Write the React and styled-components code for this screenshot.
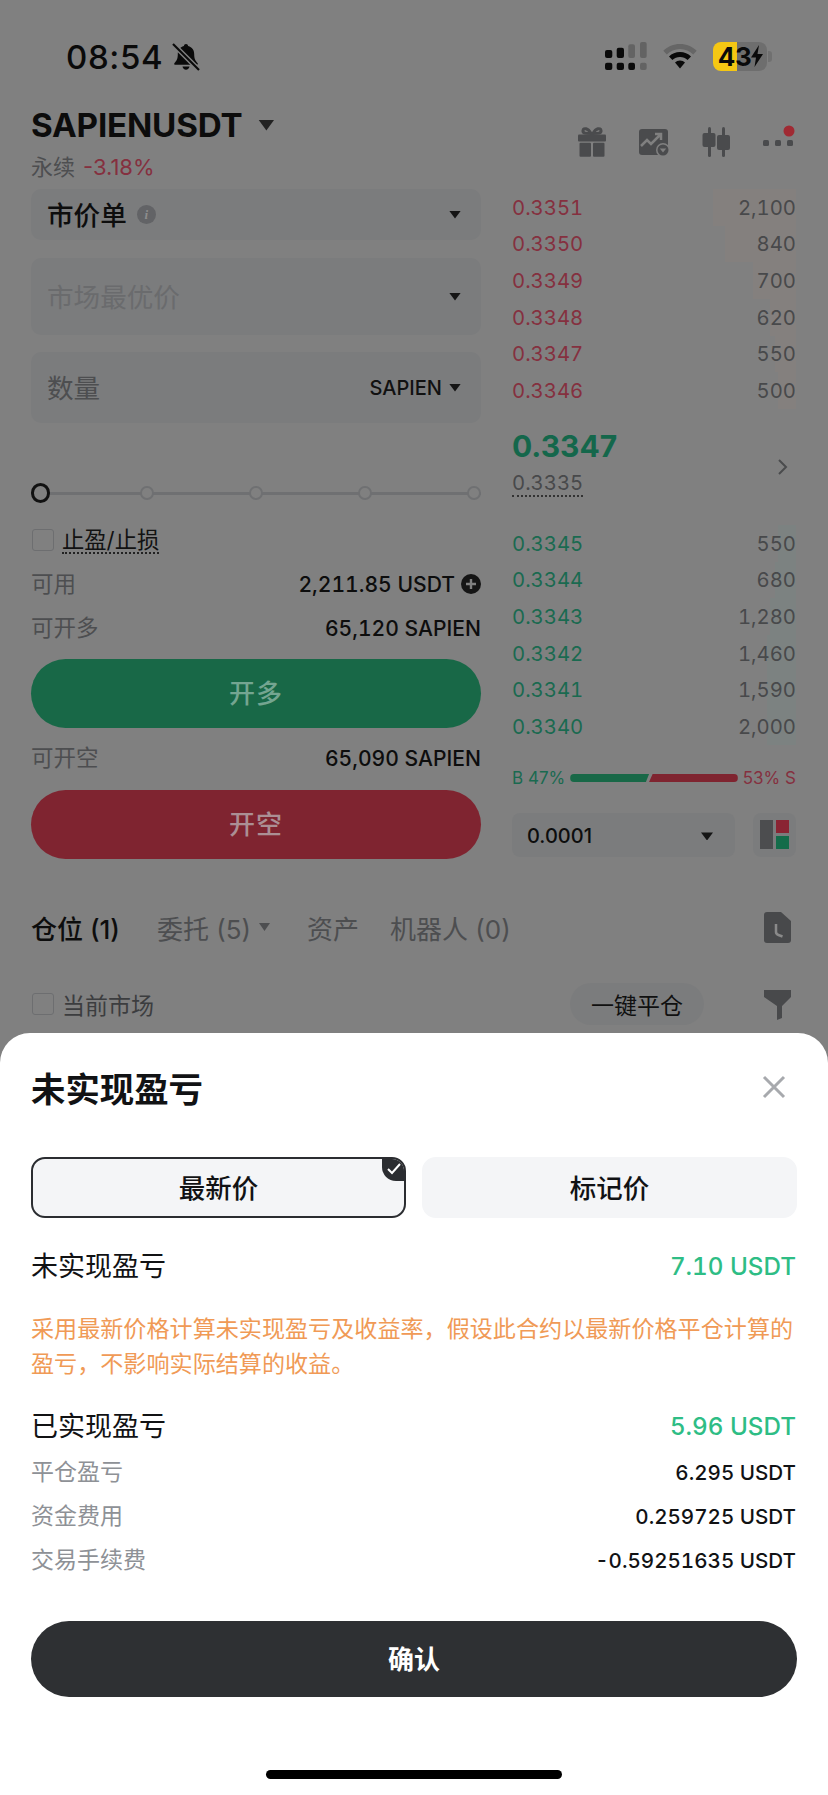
import React from "react";
import styled, { createGlobalStyle } from "styled-components";

const Global = createGlobalStyle`
  html, body { margin: 0; padding: 0; background: #808080; }
  * { box-sizing: border-box; }
  body { font-family: Inter, "Noto Sans CJK SC", "Noto Sans", sans-serif; }
`;

const Screen = styled.div`
  position: relative;
  width: 828px;
  height: 1795px;
  overflow: hidden;
  background: #808080;
  color: #0d0d0d;
`;

/* ---------- status bar ---------- */
const StatusBar = styled.div`
  display: flex;
  align-items: center;
  height: 106px;
  padding: 40px 61px 32px 66px;
`;
const Time = styled.span`
  font-size: 33px;
  font-weight: 500;
  line-height: 34px;
  color: #0a0a0a;
  letter-spacing: 0.6px;
`;
const BellIcon = styled.svg`
  width: 28px;
  height: 28px;
  margin-left: 9px;
`;
const StatusRight = styled.div`
  display: flex;
  align-items: center;
  gap: 16px;
  margin-left: auto;
  margin-top: -2px;
`;
const Battery = styled.div`
  display: flex;
  align-items: center;
  justify-content: center;
  width: 54px;
  height: 29px;
  padding-left: 1px;
  border-radius: 8px;
  background: linear-gradient(90deg, #f5c713 24px, #6e6e6e 24px);
  font-size: 26px;
  font-weight: 700;
  letter-spacing: -0.5px;
  color: #0a0a0a;
  &::after {
    content: "";
    position: absolute;
    left: 768px;
    width: 4px;
    height: 11px;
    border-radius: 0 3px 3px 0;
    background: #707070;
  }
`;

/* ---------- header ---------- */
const Header = styled.div`
  display: flex;
  justify-content: space-between;
  height: 83px;
  padding: 0 33px 0 31px;
`;
const TitleRow = styled.div`
  display: flex;
  align-items: center;
  gap: 16px;
  height: 38px;
`;
const Title = styled.div`
  font-size: 33.2px;
  font-weight: 700;
  line-height: 38px;
  letter-spacing: -0.2px;
  color: #0c0c0c;
`;
const SubRow = styled.div`
  display: flex;
  gap: 8px;
  margin-top: 8px;
  font-size: 22px;
  line-height: 30px;
  color: #4d4e50;
`;
const RedText = styled.span`
  color: #85303f;
`;
const HeaderIcons = styled.div`
  display: flex;
  gap: 28px;
  padding-top: 19px;
`;
const IconSvg = styled.svg`
  width: 34px;
  height: 34px;
`;
const Caret = styled.span`
  display: inline-block;
  flex: none;
  width: ${(p) => p.$w || 12}px;
  height: ${(p) => p.$h || 8}px;
  background: ${(p) => p.$color || "#151515"};
  clip-path: polygon(0 0, 100% 0, 50% 100%);
`;

/* ---------- trade panel ---------- */
const Main = styled.div`
  display: flex;
  gap: 31px;
  padding-left: 31px;
`;
const FormCol = styled.div`
  width: 450px;
`;
const Field = styled.div`
  display: flex;
  align-items: center;
  height: ${(p) => p.$h}px;
  margin-top: ${(p) => p.$mt || 0}px;
  padding: 0 20px 0 16px;
  border-radius: 10px;
  background: #7b7c7d;
`;
const FieldLabel = styled.span`
  font-size: 26.6px;
  font-weight: ${(p) => (p.$strong ? 500 : 400)};
  color: ${(p) => p.$color || "#0d0d0d"};
  padding-bottom: 2px;
`;
const InfoDot = styled.span`
  display: flex;
  align-items: center;
  justify-content: center;
  width: 19px;
  height: 19px;
  margin-left: 10px;
  border-radius: 50%;
  background: #626366;
  color: #8d8d8d;
  font: italic 700 13px "Liberation Serif", serif;
`;
const FieldEnd = styled.div`
  display: flex;
  align-items: center;
  gap: 7px;
  margin-left: auto;
  font-size: 20px;
  font-weight: 500;
  color: #111;
`;
const Slider = styled.div`
  display: flex;
  align-items: center;
  gap: 95.5px;
  width: 450px;
  height: 20px;
  margin-top: 60px;
  background: linear-gradient(#6f7072, #6f7072) center / 100% 3px no-repeat;
`;
const Handle = styled.span`
  width: 20px;
  height: 20px;
  margin-right: -6px;
  border: 3px solid #111;
  border-radius: 50%;
  background: #808080;
`;
const Stop = styled.span`
  width: 14px;
  height: 14px;
  border: 2px solid #6f7072;
  border-radius: 50%;
  background: #808080;
`;
const CheckRow = styled.div`
  display: flex;
  align-items: center;
  gap: 8px;
  height: 24px;
  margin-top: ${(p) => p.$mt || 0}px;
`;
const CheckBox = styled.span`
  width: 22px;
  height: 22px;
  margin-left: 1px;
  border: 1.5px solid #6d6e70;
  border-radius: 3px;
`;
const CheckLabel = styled.span`
  font-size: ${(p) => p.$size || 22.3}px;
  line-height: 25px;
  color: ${(p) => p.$color || "#121212"};
  border-bottom: ${(p) => (p.$dotted ? "2px dotted #222" : "none")};
  transform: translateY(${(p) => (p.$dotted ? 0 : 2)}px);
`;
const InfoRow = styled.div`
  display: flex;
  align-items: center;
  justify-content: space-between;
  height: 44px;
  margin-top: ${(p) => p.$mt || 0}px;
`;
const InfoLabel = styled.span`
  font-size: 22.5px;
  color: #4d4e50;
  padding-bottom: 4px;
`;
const InfoValue = styled.span`
  display: flex;
  align-items: center;
  gap: 6px;
  font-size: 21.1px;
  font-weight: 500;
  font-variant-numeric: tabular-nums;
  color: #0d0d0d;
`;
const ActionButton = styled.div`
  display: flex;
  align-items: center;
  justify-content: center;
  height: 69px;
  margin-top: ${(p) => p.$mt}px;
  padding-bottom: 4px;
  border-radius: 35px;
  background: ${(p) => p.$bg};
  color: ${(p) => p.$color};
  font-size: 26px;
  font-weight: 500;
  letter-spacing: 1px;
`;

/* ---------- order book ---------- */
const BookCol = styled.div`
  width: 284px;
`;
const BookRow = styled.div`
  display: flex;
  align-items: center;
  justify-content: space-between;
  height: 36.67px;
  font-size: 20.3px;
  font-variant-numeric: tabular-nums;
`;
const Price = styled.span`
  color: ${(p) => p.$color};
  margin-left: ${(p) => p.$ml || 0}px;
`;
const Qty = styled.span`
  color: #48494b;
`;
const Mid = styled.div`
  display: flex;
  align-items: flex-start;
  justify-content: space-between;
  height: 116px;
  padding: 19px 7px 0 0;
`;
const BigPrice = styled.div`
  font-size: 30px;
  font-weight: 700;
  line-height: 36px;
  color: #14674b;
`;
const Mark = styled.span`
  display: inline-block;
  margin-top: 6px;
  font-size: 20.3px;
  line-height: 25px;
  font-variant-numeric: tabular-nums;
  color: #48494b;
  border-bottom: 2px dotted #333;
`;
const Chevron = styled.svg`
  width: 12px;
  height: 18px;
  margin-top: 30px;
`;
const Ratio = styled.div`
  display: flex;
  align-items: center;
  height: 20px;
  margin-top: 23px;
  font-size: 17px;
  white-space: nowrap;
`;
const RatioBar = styled.span`
  height: 8px;
  margin-left: ${(p) => p.$ml}px;
  width: ${(p) => p.$w}px;
  background: ${(p) => p.$bg};
  border-radius: ${(p) => p.$r};
  clip-path: ${(p) => p.$clip};
`;
const BookFoot = styled.div`
  display: flex;
  gap: 18px;
  margin-top: 25px;
`;
const Precision = styled.div`
  display: flex;
  align-items: center;
  justify-content: space-between;
  width: 223px;
  height: 44px;
  padding: 3px 22px 0 15px;
  border-radius: 8px;
  background: #7b7c7d;
  font-size: 20px;
  font-weight: 500;
  color: #0d0d0d;
`;
const LayoutBtn = styled.div`
  display: flex;
  align-items: center;
  justify-content: center;
  width: 43px;
  height: 44px;
  border-radius: 8px;
  background: #7b7c7d;
`;

/* ---------- tabs behind the sheet ---------- */
const TabsRow = styled.div`
  display: flex;
  align-items: center;
  height: 48px;
  margin-top: 44px;
  padding: 0 37px 0 31px;
  font-size: 26px;
  color: #4d4e50;
`;
const Tab = styled.span`
  display: flex;
  align-items: center;
  gap: 8px;
  margin-left: ${(p) => p.$ml || 0}px;
  color: ${(p) => (p.$on ? "#0d0d0d" : "#4d4e50")};
  font-weight: ${(p) => (p.$on ? 500 : 400)};
  white-space: nowrap;
`;
const HistoryIcon = styled.svg`
  width: 27px;
  height: 31px;
  margin-left: auto;
`;
const FilterRow = styled.div`
  display: flex;
  align-items: center;
  height: 42px;
  margin-top: 32px;
  padding: 0 37px 0 31px;
`;
const CloseAll = styled.div`
  display: flex;
  align-items: center;
  justify-content: center;
  width: 134px;
  height: 42px;
  margin-left: auto;
  margin-right: 60px;
  border-radius: 21px;
  background: #7b7c7d;
  font-size: 23px;
  color: #101010;
`;

/* ---------- bottom sheet ---------- */
const Sheet = styled.div`
  position: absolute;
  left: 0;
  right: 0;
  top: 1033px;
  bottom: 0;
  padding: 34px 31px 0 31px;
  border-radius: 30px 30px 0 0;
  background: #fff;
`;
const SheetHead = styled.div`
  display: flex;
  align-items: center;
  justify-content: space-between;
  height: 40px;
  padding: 0 11px 0 0;
`;
const SheetTitle = styled.div`
  font-size: 34.4px;
  font-weight: 700;
  color: #111214;
`;
const ModeTabs = styled.div`
  display: grid;
  grid-template-columns: 1fr 1fr;
  gap: 16px;
  margin-top: 50px;
`;
const ModeTab = styled.div`
  position: relative;
  display: flex;
  align-items: center;
  justify-content: center;
  height: 61px;
  padding-bottom: 3px;
  overflow: hidden;
  border: 2px solid ${(p) => (p.$on ? "#2b2d31" : "#f4f5f7")};
  border-radius: 14px;
  background: #f4f5f7;
  font-size: 26.5px;
  font-weight: 500;
  color: #111214;
`;
const CheckBadge = styled.span`
  position: absolute;
  top: -2px;
  right: -2px;
  display: flex;
  align-items: center;
  justify-content: center;
  width: 24px;
  height: 24px;
  border-bottom-left-radius: 14px;
  background: #2b2d31;
`;
const PnlRow = styled.div`
  display: flex;
  align-items: center;
  justify-content: space-between;
  height: 40px;
  margin-top: ${(p) => p.$mt}px;
  padding-right: 1px;
  font-size: 27px;
  color: #111214;
`;
const RowLabel = styled.span`
  padding-bottom: 4px;
`;
const GreenValue = styled.span`
  font-size: 24.2px;
  font-weight: 500;
  font-variant-numeric: tabular-nums;
  color: #2ebd85;
`;
const Note = styled.div`
  margin-top: 26px;
  font-size: 23.1px;
  line-height: 35px;
  color: #f09a56;
`;
const DetailRow = styled.div`
  display: flex;
  align-items: center;
  justify-content: space-between;
  height: 44px;
  margin-top: ${(p) => p.$mt || 0}px;
  padding-right: 1px;
  font-size: 23px;
  color: #8e9196;
`;
const DetailValue = styled.span`
  font-size: 20.6px;
  font-weight: 500;
  font-variant-numeric: tabular-nums;
  color: #111214;
`;
const Confirm = styled.div`
  display: flex;
  align-items: center;
  justify-content: center;
  height: 76px;
  margin-top: 39px;
  padding-bottom: 4px;
  border-radius: 38px;
  background: #2e3033;
  font-size: 26px;
  font-weight: 700;
  color: #fff;
`;
const HomeBar = styled.div`
  width: 296px;
  height: 9px;
  margin: 73px 0 0 235px;
  border-radius: 5px;
  background: #000;
`;

const RED = "#85303f";
const GREEN = "#1a6a50";
const asks = [
  ["0.3351", "2,100", 83],
  ["0.3350", "840", 71],
  ["0.3349", "700", 43],
  ["0.3348", "620", 26],
  ["0.3347", "550", 21],
  ["0.3346", "500", 18],
];
const bids = [
  ["0.3345", "550", 18],
  ["0.3344", "680", 21],
  ["0.3343", "1,280", 26],
  ["0.3342", "1,460", 29],
  ["0.3341", "1,590", 29],
  ["0.3340", "2,000", 29],
];

const Depth = styled(BookRow)`
  background: linear-gradient(
    to left,
    ${(p) => p.$tint} ${(p) => p.$d}px,
    transparent ${(p) => p.$d}px
  );
`;

export default function App() {
  return (
    <Screen>
      <Global />
      <StatusBar>
        <Time>08:54</Time>
        <BellIcon viewBox="0 0 28 28">
          <path
            fill="#0a0a0a"
            d="M14 1c1.2 0 2 .9 2.1 2 4 1 6.1 4.2 6.1 8.2 0 4.6 1.2 6.6 3.3 8.7.7.8.2 1.9-.9 1.9H3.4c-1.1 0-1.6-1.1-.9-1.9 2.1-2.100 3.300-4.100 3.300-8.700 0-4 2.100-7.200 6.100-8.200C12 1.900 12.800 1 14 1zM10.500 23.500h7c-.3 1.900-1.700 3.300-3.500 3.300s-3.200-1.400-3.500-3.300z"
          />
          <path stroke="#808080" strokeWidth="5" d="M1 1l26 26" />
          <path stroke="#0a0a0a" strokeWidth="2.200" d="M1 1l26 26" />
        </BellIcon>
        <StatusRight>
          <svg width="42" height="28" viewBox="0 0 42 28">
            <rect x="0" y="8" width="7.300" height="8" rx="2" fill="#0a0a0a" />
            <rect x="11.700" y="5.700" width="7.300" height="10.300" rx="2" fill="#0a0a0a" />
            <rect x="23.300" y="2.300" width="6.700" height="13.700" rx="2" fill="#636363" />
            <rect x="35" y="0" width="6.700" height="16" rx="2" fill="#636363" />
            <rect x="0" y="20.700" width="7.300" height="7.300" rx="2" fill="#0a0a0a" />
            <rect x="11.700" y="20.700" width="7.300" height="7.300" rx="2" fill="#0a0a0a" />
            <rect x="23.300" y="20.700" width="6.700" height="7.300" rx="2" fill="#0a0a0a" />
            <rect x="35" y="20.700" width="6.700" height="7.300" rx="2" fill="#636363" />
          </svg>
          <svg width="34" height="25" viewBox="0 0 34 25">
            <path d="M17 0C10.500 0 4.600 2.600.3 6.800l3.500 3.600C7.200 7.100 11.900 5 17 5s9.800 2.100 13.200 5.400l3.500-3.600C29.400 2.600 23.500 0 17 0z" fill="#666" />
            <path d="M17 8c-4.300 0-8.200 1.700-11 4.500l3.400 3.500c2-1.900 4.700-3.100 7.600-3.100s5.600 1.200 7.600 3.100l3.400-3.500C25.200 9.700 21.300 8 17 8z" fill="#0a0a0a" />
            <path d="M17 16.500c-2 0-3.700.8-5 2l5 6 5-6c-1.300-1.200-3-2-5-2z" fill="#0a0a0a" />
          </svg>
          <Battery>
            43
            <svg width="12" height="22" viewBox="0 0 12 22">
              <path d="M8 0L0 12.500h5L3.500 22 12 9H6.500z" fill="#0a0a0a" />
            </svg>
          </Battery>
        </StatusRight>
      </StatusBar>

      <Header>
        <div>
          <TitleRow>
            <Title>SAPIENUSDT</Title>
            <Caret $w={16} $h={11} $color="#222" />
          </TitleRow>
          <SubRow>
            <span>永续</span>
            <RedText>-3.18%</RedText>
          </SubRow>
        </div>
        <HeaderIcons>
          <IconSvg viewBox="0 0 34 34">
            <g fill="#4a4b4d">
              <rect x="3" y="9.500" width="28" height="7" rx="1" />
              <rect x="4.500" y="17.800" width="11.500" height="14" rx="1" />
              <rect x="18" y="17.800" width="11.500" height="14" rx="1" />
            </g>
            <path d="M16 8.500C13 3 8.500 2.500 8 5.500S11 8.500 16 8.500zM18 8.500C21 3 25.500 2.500 26 5.500S23 8.500 18 8.500z" fill="none" stroke="#4a4b4d" strokeWidth="3" />
          </IconSvg>
          <IconSvg viewBox="0 0 34 34">
            <rect x="2" y="4" width="29" height="26" rx="3" fill="#4a4b4d" />
            <path d="M4 21l6-6 4 4 9-9M18 9h6v6" fill="none" stroke="#808080" strokeWidth="2.500" />
            <circle cx="26" cy="25" r="7" fill="#808080" />
            <circle cx="26" cy="25" r="5.500" fill="#4a4b4d" />
            <path d="M22.800 23.500h6.400L26 27.500z" fill="#808080" />
          </IconSvg>
          <IconSvg viewBox="0 0 34 34">
            <g fill="#4a4b4d">
              <rect x="9" y="2" width="3" height="30" rx="1.500" />
              <rect x="3.500" y="8" width="13" height="14" rx="2" />
              <rect x="23" y="2" width="3" height="30" rx="1.500" />
              <rect x="18" y="10" width="13" height="15" rx="2" />
            </g>
          </IconSvg>
          <IconSvg viewBox="0 0 34 34">
            <g fill="#4a4b4d">
              <rect x="2" y="15" width="6" height="6" rx="1.500" />
              <rect x="14" y="15" width="6" height="6" rx="1.500" />
              <rect x="26" y="15" width="6" height="6" rx="1.500" />
            </g>
            <circle cx="28" cy="6" r="5.500" fill="#a02a33" />
          </IconSvg>
        </HeaderIcons>
      </Header>

      <Main>
        <FormCol>
          <Field $h={51}>
            <FieldLabel $strong>市价单</FieldLabel>
            <InfoDot>i</InfoDot>
            <FieldEnd>
              <Caret />
            </FieldEnd>
          </Field>
          <Field $h={77} $mt={18}>
            <FieldLabel $color="#6a6b6d">市场最优价</FieldLabel>
            <FieldEnd>
              <Caret />
            </FieldEnd>
          </Field>
          <Field $h={71} $mt={17}>
            <FieldLabel $color="#4d4e50">数量</FieldLabel>
            <FieldEnd>
              SAPIEN
              <Caret />
            </FieldEnd>
          </Field>
          <Slider>
            <Handle />
            <Stop />
            <Stop />
            <Stop />
            <Stop />
          </Slider>
          <CheckRow $mt={25}>
            <CheckBox />
            <CheckLabel $dotted>止盈/止损</CheckLabel>
          </CheckRow>
          <InfoRow $mt={10}>
            <InfoLabel>可用</InfoLabel>
            <InfoValue>
              2,211.85 USDT
              <svg width="20" height="20" viewBox="0 0 20 20">
                <circle cx="10" cy="10" r="10" fill="#151515" />
                <path d="M10 5v10M5 10h10" stroke="#808080" strokeWidth="2.400" />
              </svg>
            </InfoValue>
          </InfoRow>
          <InfoRow>
            <InfoLabel>可开多</InfoLabel>
            <InfoValue>65,120 SAPIEN</InfoValue>
          </InfoRow>
          <ActionButton $mt={9} $bg="#186847" $color="#74a591">开多</ActionButton>
          <InfoRow $mt={8}>
            <InfoLabel>可开空</InfoLabel>
            <InfoValue>65,090 SAPIEN</InfoValue>
          </InfoRow>
          <ActionButton $mt={10} $bg="#7f2430" $color="#ab8f94">开空</ActionButton>
        </FormCol>

        <BookCol>
          {asks.map(([p, q, d]) => (
            <Depth key={p} $tint="#84807e" $d={d}>
              <Price $color={RED}>{p}</Price>
              <Qty>{q}</Qty>
            </Depth>
          ))}
          <Mid>
            <div>
              <BigPrice>0.3347</BigPrice>
              <Mark>0.3335</Mark>
            </div>
            <Chevron viewBox="0 0 12 18">
              <path d="M2 2l7 7-7 7" fill="none" stroke="#4a4b4d" strokeWidth="2" />
            </Chevron>
          </Mid>
          {bids.map(([p, q, d]) => (
            <Depth key={p} $tint="#7c8281" $d={d}>
              <Price $color={GREEN}>{p}</Price>
              <Qty>{q}</Qty>
            </Depth>
          ))}
          <Ratio>
            <Price $color={GREEN}>B 47%</Price>
            <RatioBar $ml={5} $w={80} $bg="#186847" $r="4px 0 0 4px" $clip="polygon(0 0, 100% 0, 96% 100%, 0 100%)" />
            <RatioBar $ml={0} $w={90} $bg="#7f2430" $r="0 4px 4px 0" $clip="polygon(4% 0, 100% 0, 100% 100%, 0 100%)" />
            <Price $color={RED} $ml={5}>53% S</Price>
          </Ratio>
          <BookFoot>
            <Precision>
              0.0001
              <Caret />
            </Precision>
            <LayoutBtn>
              <svg width="29" height="29" viewBox="0 0 29 29">
                <rect x="0" y="0" width="13" height="29" fill="#4c4d4f" />
                <rect x="16" y="0" width="13" height="13" fill="#8a2433" />
                <rect x="16" y="16" width="13" height="13" fill="#146c4a" />
              </svg>
            </LayoutBtn>
          </BookFoot>
        </BookCol>
      </Main>

      <TabsRow>
        <Tab $on>仓位 (1)</Tab>
        <Tab $ml={37}>
          委托 (5)
          <Caret $w={11} $h={8} $color="#4d4e50" />
        </Tab>
        <Tab $ml={37}>资产</Tab>
        <Tab $ml={31}>机器人 (0)</Tab>
        <HistoryIcon viewBox="0 0 27 31">
          <path d="M3 0h14l10 9v19a3 3 0 0 1-3 3H3a3 3 0 0 1-3-3V3a3 3 0 0 1 3-3z" fill="#48494b" />
          <path d="M12 12v8c0 1.500 1 2.500 2.500 3l4 1.500" fill="none" stroke="#8a8a8a" strokeWidth="2.500" />
        </HistoryIcon>
      </TabsRow>
      <FilterRow>
        <CheckRow>
          <CheckBox />
          <CheckLabel $size={23} $color="#3c3d3f">当前市场</CheckLabel>
        </CheckRow>
        <CloseAll>一键平仓</CloseAll>
        <svg width="27" height="31" viewBox="0 0 27 31">
          <path d="M0 1h27v7L18 17v12l-5 2V17L0 8z" fill="#48494b" />
        </svg>
      </FilterRow>

      <Sheet>
        <SheetHead>
          <SheetTitle>未实现盈亏</SheetTitle>
          <svg width="24" height="24" viewBox="0 0 24 24">
            <path d="M2 2l20 20M22 2L2 22" stroke="#a7a9ad" strokeWidth="3" />
          </svg>
        </SheetHead>
        <ModeTabs>
          <ModeTab $on>
            最新价
            <CheckBadge>
              <svg width="16" height="14" viewBox="0 0 16 14">
                <path d="M2 7l4 4 8-9" fill="none" stroke="#fff" strokeWidth="2" />
              </svg>
            </CheckBadge>
          </ModeTab>
          <ModeTab>标记价</ModeTab>
        </ModeTabs>
        <PnlRow $mt={28}>
          <RowLabel>未实现盈亏</RowLabel>
          <GreenValue>7.10 USDT</GreenValue>
        </PnlRow>
        <Note>采用最新价格计算未实现盈亏及收益率，假设此合约以最新价格平仓计算的盈亏，不影响实际结算的收益。</Note>
        <PnlRow $mt={24}>
          <RowLabel>已实现盈亏</RowLabel>
          <GreenValue>5.96 USDT</GreenValue>
        </PnlRow>
        <DetailRow $mt={4}>
          <RowLabel>平仓盈亏</RowLabel>
          <DetailValue>6.295 USDT</DetailValue>
        </DetailRow>
        <DetailRow>
          <RowLabel>资金费用</RowLabel>
          <DetailValue>0.259725 USDT</DetailValue>
        </DetailRow>
        <DetailRow>
          <RowLabel>交易手续费</RowLabel>
          <DetailValue>-0.59251635 USDT</DetailValue>
        </DetailRow>
        <Confirm>确认</Confirm>
        <HomeBar />
      </Sheet>
    </Screen>
  );
}
